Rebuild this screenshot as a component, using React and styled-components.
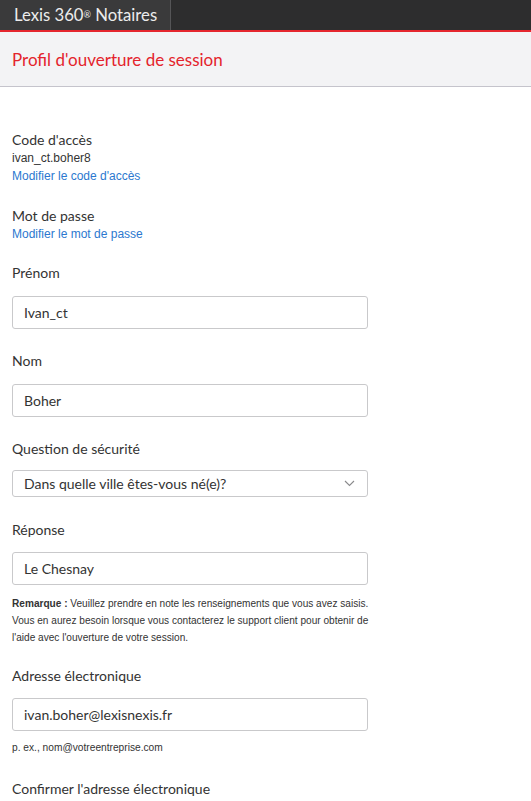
import styled, { createGlobalStyle } from "styled-components";

const GlobalStyle = createGlobalStyle`
  body {
    margin: 0;
    background: #ffffff;
    font-family: "Lato", "Liberation Sans", sans-serif;
    color: #333333;
  }
  * { box-sizing: border-box; }
`;

const TopBar = styled.div`
  display: flex;
  height: 32px;
  background: #2d2d2e;
  border-bottom: 2px solid #e5262e;
`;

const Tab = styled.div`
  display: flex;
  align-items: center;
  padding: 0 13px 0 14px;
  background: #3a3a3b;
  border-right: 1px solid #555557;
  color: #ececec;
  font-size: 16.7px;
  line-height: 30px;
  white-space: nowrap;

  sup {
    font-size: 9px;
    vertical-align: 5px;
  }
`;

const Band = styled.div`
  height: 55px;
  display: flex;
  align-items: center;
  padding: 0 12px;
  background: #f3f3f5;
  border-bottom: 1px solid #c5c4cc;
`;

const Title = styled.h1`
  margin: 0;
  padding-top: 1px;
  font-size: 17px;
  font-weight: 400;
  color: #e4232c;
`;

const Content = styled.div`
  padding: 44px 12px 0;
  display: flex;
  flex-direction: column;
`;

const Block = styled.div`
  display: flex;
  flex-direction: column;
  align-items: flex-start;
  margin-bottom: ${(p) => p.$after}px;
`;

const Label = styled.div`
  font-size: 14px;
  line-height: 18px;
  color: #333333;
  margin-bottom: ${(p) => p.$gap || 0}px;
`;

const Value = styled.div`
  font-family: "Liberation Sans", Arial, sans-serif;
  font-size: 12px;
  line-height: 18px;
  color: #333333;
`;

const Link = styled.a`
  font-family: "Liberation Sans", Arial, sans-serif;
  font-size: 12px;
  line-height: 18px;
  color: #2b78cf;
  text-decoration: none;
`;

const Input = styled.div`
  width: 356px;
  height: 33px;
  display: flex;
  align-items: center;
  padding: 0 11px;
  border: 1px solid #c9c9cb;
  border-radius: 3px;
  font-size: 14px;
  color: #333333;
`;

const Select = styled(Input)`
  height: 27px;
  justify-content: space-between;
  padding-right: 12px;
`;

const Note = styled.p`
  margin: 10px 0 0;
  font-family: "Liberation Sans", Arial, sans-serif;
  font-size: 10.1px;
  line-height: 17px;
  color: #333333;
  white-space: nowrap;

  b {
    font-weight: 700;
  }
`;

const Hint = styled.div`
  margin-top: 10px;
  font-family: "Liberation Sans", Arial, sans-serif;
  font-size: 10.2px;
  line-height: 14px;
  color: #333333;
`;

const Chevron = () => (
  <svg width="11" height="7" viewBox="0 0 11 7" fill="none">
    <path d="M1 1l4.5 4.5L10 1" stroke="#8a8a8c" strokeWidth="1.1" />
  </svg>
);

export default function App() {
  return (
    <>
      <GlobalStyle />
      <TopBar>
        <Tab>
          Lexis 360<sup>®</sup>&nbsp;Notaires
        </Tab>
      </TopBar>
      <Band>
        <Title>Profil d'ouverture de session</Title>
      </Band>
      <Content>
        <Block $after={22}>
          <Label>Code d'accès</Label>
          <Value>ivan_ct.boher8</Value>
          <Link>Modifier le code d'accès</Link>
        </Block>
        <Block $after={21}>
          <Label>Mot de passe</Label>
          <Link>Modifier le mot de passe</Link>
        </Block>
        <Block $after={23}>
          <Label $gap={14}>Prénom</Label>
          <Input>Ivan_ct</Input>
        </Block>
        <Block $after={23}>
          <Label $gap={14}>Nom</Label>
          <Input>Boher</Input>
        </Block>
        <Block $after={24}>
          <Label $gap={12}>Question de sécurité</Label>
          <Select>
            Dans quelle ville êtes-vous né(e)?
            <Chevron />
          </Select>
        </Block>
        <Block $after={21}>
          <Label $gap={13}>Réponse</Label>
          <Input>Le Chesnay</Input>
          <Note>
            <b>Remarque :</b> Veuillez prendre en note les renseignements que vous avez saisis.
            <br />
            Vous en aurez besoin lorsque vous contacterez le support client pour obtenir de
            <br />
            l'aide avec l'ouverture de votre session.
          </Note>
        </Block>
        <Block $after={25}>
          <Label $gap={13}>Adresse électronique</Label>
          <Input>ivan.boher@lexisnexis.fr</Input>
          <Hint>p. ex., nom@votreentreprise.com</Hint>
        </Block>
        <Block $after={20}>
          <Label>Confirmer l'adresse électronique</Label>
        </Block>
      </Content>
    </>
  );
}
